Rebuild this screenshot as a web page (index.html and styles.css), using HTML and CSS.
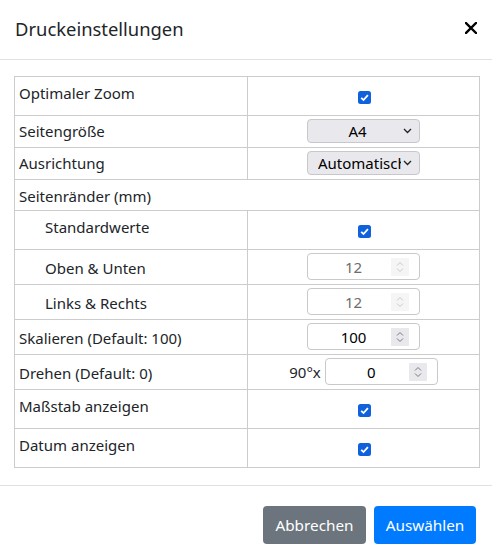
FILE: index.html
```html
<!DOCTYPE html>
<html lang="de">
<head>
<meta charset="utf-8">
<title>Druckeinstellungen</title>
<link rel="stylesheet" href="styles.css">
</head>
<body>
<div class="modal">
  <header class="modal-header">
    <h5 class="modal-title">Druckeinstellungen</h5>
    <span class="close" aria-label="Schließen">
      <svg width="12" height="12" viewBox="0 0 12 12"><path d="M1 1 L11 11 M11 1 L1 11" stroke="#000" stroke-width="2.4" stroke-linecap="square"/></svg>
    </span>
  </header>
  <div class="modal-body">
    <div class="settings">
      <div class="row row-check">
        <div class="label">Optimaler Zoom</div>
        <div class="ctrl"><span class="checkbox"><svg width="13" height="13" viewBox="0 0 13 13"><rect width="13" height="13" rx="2.5" fill="#0f62dc"/><path d="M3.2 6.8 L5.5 9 L9.9 4.2" fill="none" stroke="#fff" stroke-width="1.8"/></svg></span></div>
      </div>
      <div class="row row-select">
        <div class="label">Seitengröße</div>
        <div class="ctrl"><div class="select"><span class="sel-text sel-center">A4</span><svg class="chev" width="9" height="6" viewBox="0 0 9 6"><path d="M1 1 L4.5 4.5 L8 1" fill="none" stroke="#222" stroke-width="1.3"/></svg></div></div>
      </div>
      <div class="row row-select">
        <div class="label">Ausrichtung</div>
        <div class="ctrl"><div class="select"><span class="sel-text">Automatisch</span><svg class="chev" width="9" height="6" viewBox="0 0 9 6"><path d="M1 1 L4.5 4.5 L8 1" fill="none" stroke="#222" stroke-width="1.3"/></svg></div></div>
      </div>
      <div class="row row-section">
        <div class="label label-full">Seitenränder (mm)</div>
      </div>
      <div class="row row-check">
        <div class="label indent">Standardwerte</div>
        <div class="ctrl"><span class="checkbox"><svg width="13" height="13" viewBox="0 0 13 13"><rect width="13" height="13" rx="2.5" fill="#0f62dc"/><path d="M3.2 6.8 L5.5 9 L9.9 4.2" fill="none" stroke="#fff" stroke-width="1.8"/></svg></span></div>
      </div>
      <div class="row row-num">
        <div class="label indent">Oben &amp; Unten</div>
        <div class="ctrl"><div class="number disabled"><span class="num-val">12</span><span class="spin"><svg width="18" height="18" viewBox="0 0 18 18"><path d="M6 7.5 L9 4.5 L12 7.5 M6 10.5 L9 13.5 L12 10.5" fill="none" stroke="#c9c9c9" stroke-width="1"/></svg></span></div></div>
      </div>
      <div class="row row-num">
        <div class="label indent">Links &amp; Rechts</div>
        <div class="ctrl"><div class="number disabled"><span class="num-val">12</span><span class="spin"><svg width="18" height="18" viewBox="0 0 18 18"><path d="M6 7.5 L9 4.5 L12 7.5 M6 10.5 L9 13.5 L12 10.5" fill="none" stroke="#c9c9c9" stroke-width="1"/></svg></span></div></div>
      </div>
      <div class="row row-num">
        <div class="label">Skalieren (Default: 100)</div>
        <div class="ctrl"><div class="number"><span class="num-val">100</span><span class="spin"><svg width="18" height="18" viewBox="0 0 18 18"><path d="M6 7.5 L9 4.5 L12 7.5 M6 10.5 L9 13.5 L12 10.5" fill="none" stroke="#7a7a7a" stroke-width="1"/></svg></span></div></div>
      </div>
      <div class="row row-num">
        <div class="label">Drehen (Default: 0)</div>
        <div class="ctrl"><span class="prefix">90°x</span><div class="number"><span class="num-val">0</span><span class="spin"><svg width="18" height="18" viewBox="0 0 18 18"><path d="M6 7.5 L9 4.5 L12 7.5 M6 10.5 L9 13.5 L12 10.5" fill="none" stroke="#7a7a7a" stroke-width="1"/></svg></span></div></div>
      </div>
      <div class="row row-check">
        <div class="label">Maßstab anzeigen</div>
        <div class="ctrl"><span class="checkbox"><svg width="13" height="13" viewBox="0 0 13 13"><rect width="13" height="13" rx="2.5" fill="#0f62dc"/><path d="M3.2 6.8 L5.5 9 L9.9 4.2" fill="none" stroke="#fff" stroke-width="1.8"/></svg></span></div>
      </div>
      <div class="row row-check row-last">
        <div class="label">Datum anzeigen</div>
        <div class="ctrl"><span class="checkbox"><svg width="13" height="13" viewBox="0 0 13 13"><rect width="13" height="13" rx="2.5" fill="#0f62dc"/><path d="M3.2 6.8 L5.5 9 L9.9 4.2" fill="none" stroke="#fff" stroke-width="1.8"/></svg></span></div>
      </div>
    </div>
  </div>
  <footer class="modal-footer">
    <button class="btn btn-secondary">Abbrechen</button>
    <button class="btn btn-primary">Auswählen</button>
  </footer>
</div>
</body>
</html>
```
FILE: styles.css
```css
* { box-sizing: border-box; }
html, body { margin: 0; padding: 0; background: #fff; }
body {
  font-family: "Noto Sans", "Open Sans", sans-serif;
  font-size: 15px;
  color: #212529;
}
.modal { width: 492px; height: 558px; }

.modal-header {
  height: 60px;
  border-bottom: 1px solid #dee2e6;
  display: flex;
  align-items: center;
  justify-content: space-between;
  padding: 0 15px 1px 15px;
}
.modal-title {
  margin: 0;
  font-size: 18.4px;
  font-weight: 400;
  line-height: 24px;
}
.close { display: flex; width: 12px; height: 12px; margin-right: 0; margin-top: -2px; }

.modal-body { padding: 16px 12px 16px 14px; height: 425px; }

.settings {
  width: 466px;
  border: 1px solid #cccccc;
}
.row {
  display: grid;
  grid-template-columns: 233px 231px;
  border-bottom: 1px solid #cccccc;
}
.row-last { border-bottom: none; height: 38px; }
.row-check { height: 39px; }
.row-check.row-last { height: 38px; }
.row-select { height: 32px; }
.row-section { height: 31px; }
.row-num { height: 35px; }

.label {
  border-right: 1px solid #cccccc;
  padding-left: 4px;
  line-height: 24px;
  white-space: nowrap;
}
.label-full { grid-column: 1 / 3; border-right: none; padding-top: 4px; }
.indent { padding-left: 30px; }
.row-check .label { padding-top: 4px; }
.row-select .label { padding-top: 3px; }
.row-num .label { padding-top: 6px; }

.ctrl {
  display: flex;
  justify-content: center;
  align-items: flex-start;
}
.row-check .ctrl { padding-top: 14px; }
.row-select .ctrl { padding-top: 3px; }
.row-num .ctrl { padding-top: 3px; }

.checkbox { display: flex; width: 13px; height: 13px; margin-left: 1px; }

.select {
  width: 113px;
  height: 24px;
  background: #e9e9ed;
  border: 1px solid #c8c8cc;
  border-radius: 4px;
  display: flex;
  align-items: center;
  padding: 0 7px 0 10px;
  line-height: 22px;
  color: #000;
}
.sel-text { flex: 1; overflow: hidden; white-space: nowrap; }
.sel-center { text-align: center; padding-right: 4px; }
.chev { flex: none; margin-left: 2px; }

.number {
  width: 113px;
  height: 27px;
  border: 1px solid #c9c9c9;
  border-radius: 4px;
  background: #fff;
  display: flex;
  align-items: center;
  padding: 0 10px 0 10px;
  color: #000;
}
.num-val { flex: 1; text-align: center; line-height: 23px; padding-top: 2px; align-self: flex-start; }
.number.disabled { color: #6d6d6d; }
.spin { display: flex; width: 18px; height: 18px; background: #e9e9ed; margin-left: 2px; }
.number.disabled .spin { background: #f5f5f5; }
.prefix { line-height: 23px; padding-top: 3px; margin-right: 4px; }

.modal-footer {
  border-top: 1px solid #dee2e6;
  display: flex;
  justify-content: flex-end;
  gap: 8px;
  padding: 20px 16px 0 0;
}
.btn {
  font-family: inherit;
  font-size: 15.3px;
  color: #fff;
  border: none;
  border-radius: 4px;
  height: 38px;
  padding: 0;
  line-height: 38px;
}
.btn-secondary { background: #6c757d; width: 103px; }
.btn-primary { background: #007bff; width: 102px; }
```
